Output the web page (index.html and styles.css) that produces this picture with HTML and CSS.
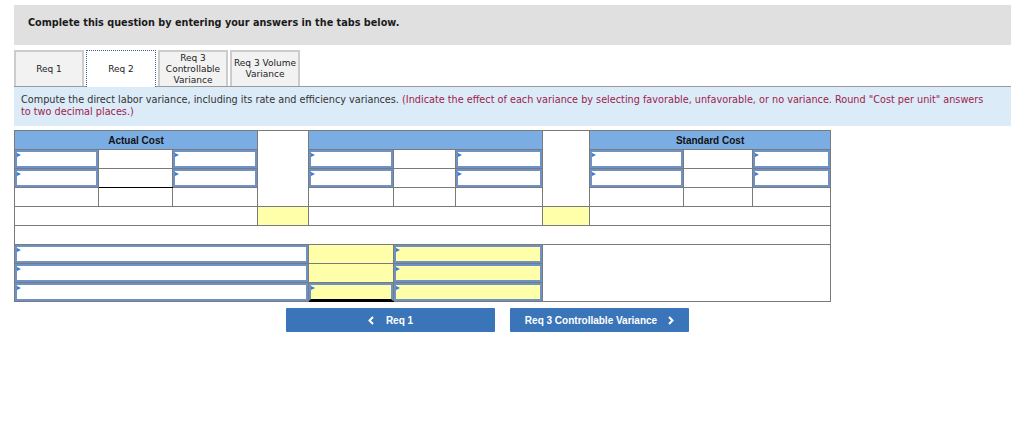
FILE: index.html
```html
<!DOCTYPE html>
<html>
<head>
<meta charset="utf-8">
<link rel="stylesheet" href="styles.css">
</head>
<body>
<div class="page">
  <div class="banner">Complete this question by entering your answers in the tabs below.</div>
  <div class="tabs">
    <div class="tab">Req 1</div>
    <div class="tab active">Req 2</div>
    <div class="tab">Req 3<br>Controllable<br>Variance</div>
    <div class="tab">Req 3 Volume<br>Variance</div>
  </div>
  <div class="instr">Compute the direct labor variance, including its rate and efficiency variances. <span class="red">(Indicate the effect of each variance by selecting favorable, unfavorable, or no variance. Round "Cost per unit" answers to two decimal places.)</span></div>

  <table class="grid">
    <colgroup>
      <col style="width:84px"><col style="width:74px"><col style="width:85px"><col style="width:51px">
      <col style="width:85px"><col style="width:62px"><col style="width:87px"><col style="width:47px">
      <col style="width:94px"><col style="width:69px"><col style="width:78px">
    </colgroup>
    <tr>
      <th colspan="3">Actual Cost</th>
      <td rowspan="4"></td>
      <th colspan="3"></th>
      <td rowspan="4"></td>
      <th colspan="3">Standard Cost</th>
    </tr>
    <tr>
      <td><div class="inp"></div></td><td></td><td><div class="inp"></div></td>
      <td><div class="inp"></div></td><td></td><td><div class="inp"></div></td>
      <td><div class="inp"></div></td><td></td><td><div class="inp"></div></td>
    </tr>
    <tr>
      <td><div class="inp"></div></td><td class="uline"></td><td><div class="inp"></div></td>
      <td><div class="inp"></div></td><td></td><td><div class="inp"></div></td>
      <td><div class="inp"></div></td><td></td><td><div class="inp"></div></td>
    </tr>
    <tr>
      <td></td><td></td><td></td>
      <td></td><td></td><td></td>
      <td></td><td></td><td></td>
    </tr>
    <tr>
      <td colspan="3"></td><td class="yel"></td><td colspan="3"></td><td class="yel"></td><td colspan="3"></td>
    </tr>
    <tr>
      <td colspan="11"></td>
    </tr>
    <tr>
      <td colspan="4"><div class="inp"></div></td>
      <td class="yel"></td>
      <td colspan="2" class="yel"><div class="inp"></div></td>
      <td colspan="4" rowspan="3"></td>
    </tr>
    <tr>
      <td colspan="4"><div class="inp"></div></td>
      <td class="yel"></td>
      <td colspan="2" class="yel"><div class="inp"></div></td>
    </tr>
    <tr>
      <td colspan="4"><div class="inp"></div></td>
      <td class="yel total"><div class="inp"></div></td>
      <td colspan="2" class="yel"><div class="inp"></div></td>
    </tr>
  </table>

  <div class="nav">
    <div class="btn prev">
      <svg width="6" height="9" viewBox="0 0 6 9"><polyline points="5,1 1.5,4.5 5,8" fill="none" stroke="#fff" stroke-width="2"/></svg>
      <span>Req 1</span>
    </div>
    <div class="btn next">
      <span>Req 3 Controllable Variance</span>
      <svg width="6" height="9" viewBox="0 0 6 9"><polyline points="1,1 4.5,4.5 1,8" fill="none" stroke="#fff" stroke-width="2"/></svg>
    </div>
  </div>
</div>
</body>
</html>
```

FILE: styles.css
```css
html, body {
  margin: 0;
  padding: 0;
  background: #ffffff;
}
body {
  font-family: "DejaVu Sans", Verdana, sans-serif;
  color: #222;
}
.page {
  padding: 5px 0 0 14px;
  width: 997px;
}
.banner {
  height: 40px;
  box-sizing: border-box;
  background: #e0e0e0;
  padding: 12px 0 0 14px;
  font-size: 9.7px;
  font-weight: bold;
  color: #1a1a1a;
}
.tabs {
  display: flex;
  gap: 2px;
  margin-top: 5px;
  height: 36px;
}
.tab {
  width: 70px;
  box-sizing: border-box;
  background: #f2f2f2;
  border: 2px solid #cccccc;
  border-bottom: none;
  display: flex;
  align-items: center;
  justify-content: center;
  text-align: center;
  font-size: 9px;
  line-height: 11px;
  color: #222;
}
.tab.active {
  background: #ffffff;
  border: 1px dotted #3b5f9a;
  border-bottom: none;
  position: relative;
  z-index: 1;
  height: 37px;
}
.instr {
  border-top: 1px solid #9a9a9a;
  background: #dbebf8;
  height: 40px;
  box-sizing: border-box;
  padding: 7px 20px 0 7px;
  font-size: 9.7px;
  line-height: 12px;
  color: #333;
}
.red {
  color: #a0224c;
}
.grid {
  margin-top: 4px;
  border-collapse: collapse;
  table-layout: fixed;
  width: 817px;
  font-family: "Liberation Sans", Arial, sans-serif;
}
.grid th, .grid td {
  border: 1px solid #7a7a7a;
  padding: 0;
  height: 18px;
  background: #ffffff;
}
.grid th {
  background: #7aade4;
  font-size: 10px;
  font-weight: bold;
  color: #111;
}
.grid td.yel {
  background: #ffffaa;
}
.grid td.uline {
  border-bottom-color: #000;
}
.grid td.total {
  border-top-color: #000;
  border-bottom-color: #000;
}
.inp {
  position: relative;
  height: 18px;
  box-sizing: border-box;
  border: 2px solid #6f92c6;
}
.total .inp {
  border-bottom-color: #000;
}
.inp::before {
  content: "";
  position: absolute;
  left: 0;
  top: 1px;
  border-left: 4px solid #3a7bd5;
  border-top: 2.5px solid transparent;
  border-bottom: 2.5px solid transparent;
}
.nav {
  display: flex;
  gap: 15px;
  margin: 6px 0 0 272px;
}
.btn {
  height: 24px;
  background: #3a75b9;
  border-radius: 1px;
  color: #ffffff;
  font-family: "Liberation Sans", Arial, sans-serif;
  font-size: 10px;
  font-weight: bold;
  display: flex;
  align-items: center;
  justify-content: center;
}
.btn.prev {
  width: 209px;
  gap: 12px;
}
.btn.next {
  width: 179px;
  gap: 11px;
}
```
